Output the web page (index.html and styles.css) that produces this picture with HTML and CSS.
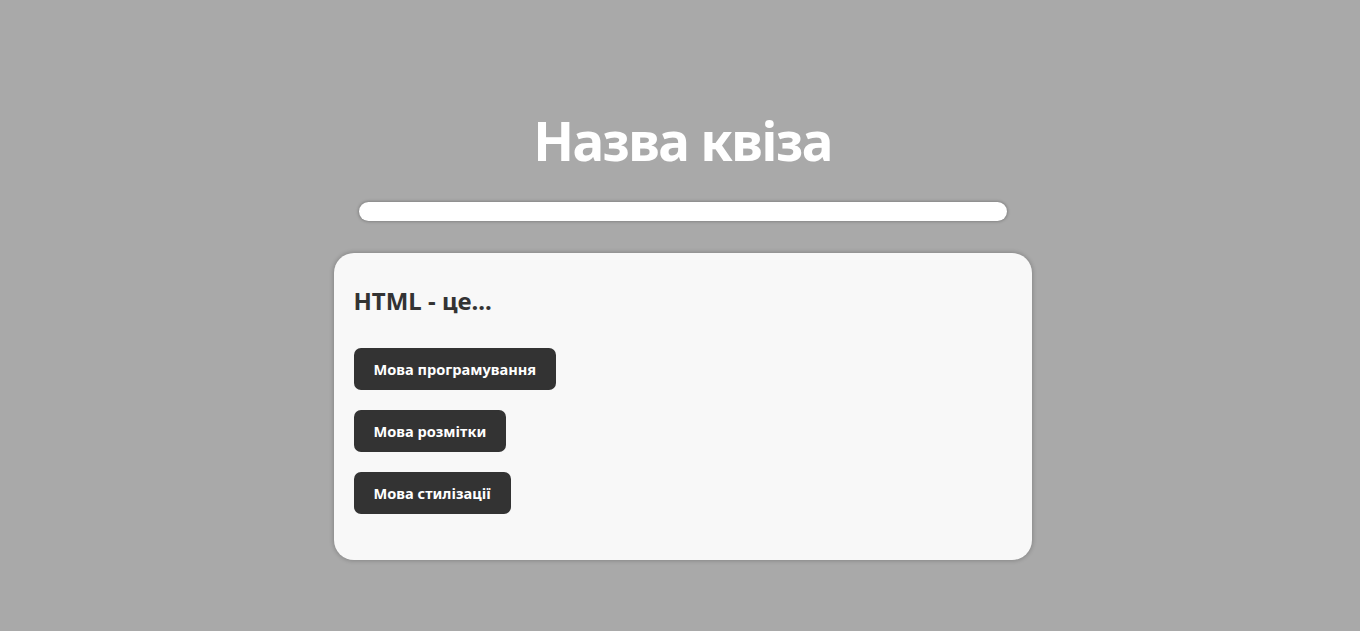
FILE: index.html
```html
<!DOCTYPE html>
<html lang="uk">
<head>
<meta charset="utf-8">
<title>Квіз</title>
<link rel="stylesheet" href="styles.css">
</head>
<body>
<main class="page">
  <h1 class="title">Назва квіза</h1>
  <div class="progress"><div class="progress-fill"></div></div>
  <section class="card">
    <h2 class="question">HTML - це...</h2>
    <div class="answers">
      <button class="answer">Мова програмування</button>
      <button class="answer">Мова розмітки</button>
      <button class="answer">Мова стилізації</button>
    </div>
  </section>
</main>
</body>
</html>
```
FILE: styles.css
```css
html, body {
  margin: 0;
  padding: 0;
}
body {
  background: #a9a9a9;
  font-family: "Noto Sans", "Open Sans", sans-serif;
  height: 631px;
  overflow: hidden;
}
.page {
  display: flex;
  flex-direction: column;
  align-items: center;
  padding-top: 108px;
  padding-left: 5px;
}
.title {
  margin: 0;
  color: #fff;
  font-size: 53px;
  font-weight: 700;
  line-height: 66px;
  letter-spacing: -1.6px;
}
.progress {
  margin-top: 28px;
  width: 648px;
  height: 19px;
  border-radius: 10px;
  background: #fff;
  box-shadow: 0 0 3px 1px rgba(0,0,0,0.22);
  overflow: hidden;
}
.progress-fill {
  width: 0;
  height: 100%;
}
.card {
  margin-top: 32px;
  width: 658px;
  padding: 27px 20px 46px 20px;
  background: #f8f8f8;
  border-radius: 20px;
  box-shadow: 0 0 4px 1px rgba(0,0,0,0.2);
}
.question {
  margin: 0;
  color: #333;
  font-size: 24px;
  font-weight: 700;
  line-height: 42px;
}
.answers {
  margin-top: 26px;
  display: flex;
  flex-direction: column;
  align-items: flex-start;
  gap: 20px;
}
.answer {
  height: 42px;
  padding: 0 20px;
  border: none;
  border-radius: 7px;
  background: #333;
  color: #fff;
  font-family: "Noto Sans", "Open Sans", sans-serif;
  font-size: 14.6px;
  font-weight: 700;
  cursor: pointer;
}
```
